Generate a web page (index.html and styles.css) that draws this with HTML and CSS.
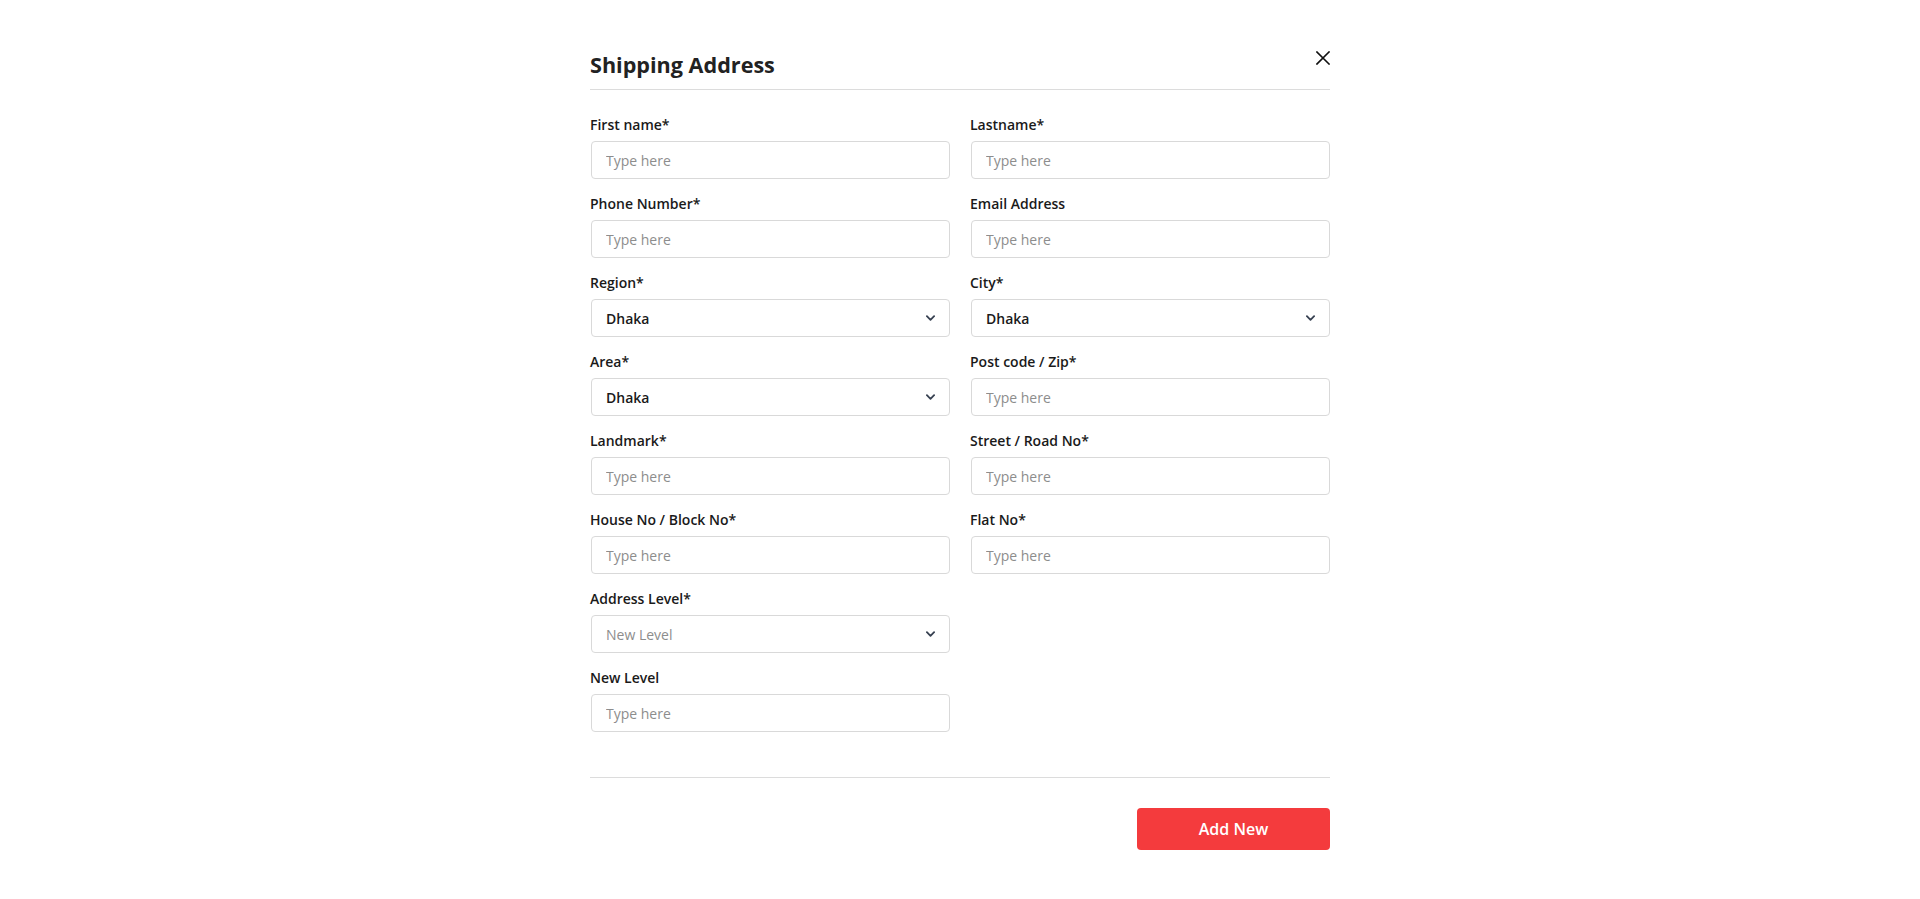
FILE: index.html
```html
<!DOCTYPE html>
<html lang="en">
<head>
<meta charset="utf-8">
<title>Shipping Address</title>
<link rel="stylesheet" href="styles.css">
</head>
<body>
<div class="modal">
  <div class="modal-header">
    <h1 class="modal-title">Shipping Address</h1>
    <button class="close-btn" type="button" aria-label="Close">
      <svg width="14" height="14" viewBox="0 0 14 14"><path d="M1 1L13 13M13 1L1 13" stroke="#111" stroke-width="1.6" fill="none" stroke-linecap="square"/></svg>
    </button>
  </div>
  <form class="form-grid">
    <div class="field"><label class="label">First name*</label><input class="input" type="text" placeholder="Type here"></div>
    <div class="field"><label class="label">Lastname*</label><input class="input" type="text" placeholder="Type here"></div>
    <div class="field"><label class="label">Phone Number*</label><input class="input" type="text" placeholder="Type here"></div>
    <div class="field"><label class="label">Email Address</label><input class="input" type="text" placeholder="Type here"></div>
    <div class="field"><label class="label">Region*</label><div class="select"><span class="select-value">Dhaka</span><svg class="chev" width="10" height="6" viewBox="0 0 10 6"><path d="M1 1L5 5L9 1" stroke="#374151" stroke-width="2" fill="none" stroke-linecap="round" stroke-linejoin="round"/></svg></div></div>
    <div class="field"><label class="label">City*</label><div class="select"><span class="select-value">Dhaka</span><svg class="chev" width="10" height="6" viewBox="0 0 10 6"><path d="M1 1L5 5L9 1" stroke="#374151" stroke-width="2" fill="none" stroke-linecap="round" stroke-linejoin="round"/></svg></div></div>
    <div class="field"><label class="label">Area*</label><div class="select"><span class="select-value">Dhaka</span><svg class="chev" width="10" height="6" viewBox="0 0 10 6"><path d="M1 1L5 5L9 1" stroke="#374151" stroke-width="2" fill="none" stroke-linecap="round" stroke-linejoin="round"/></svg></div></div>
    <div class="field"><label class="label">Post code / Zip*</label><input class="input" type="text" placeholder="Type here"></div>
    <div class="field"><label class="label">Landmark*</label><input class="input" type="text" placeholder="Type here"></div>
    <div class="field"><label class="label">Street / Road No*</label><input class="input" type="text" placeholder="Type here"></div>
    <div class="field"><label class="label">House No / Block No*</label><input class="input" type="text" placeholder="Type here"></div>
    <div class="field"><label class="label">Flat No*</label><input class="input" type="text" placeholder="Type here"></div>
    <div class="field"><label class="label">Address Level*</label><div class="select"><span class="select-placeholder">New Level</span><svg class="chev" width="10" height="6" viewBox="0 0 10 6"><path d="M1 1L5 5L9 1" stroke="#374151" stroke-width="2" fill="none" stroke-linecap="round" stroke-linejoin="round"/></svg></div></div>
    <div class="field empty"></div>
    <div class="field"><label class="label">New Level</label><input class="input" type="text" placeholder="Type here"></div>
  </form>
  <div class="modal-footer">
    <button class="btn-primary" type="button">Add New</button>
  </div>
</div>
</body>
</html>
```
FILE: styles.css
```css
* { box-sizing: border-box; }
html, body { margin: 0; padding: 0; background: #fff; }
body { font-family: "Open Sans", "Noto Sans", sans-serif; color: #222; }

.modal {
  width: 740px;
  margin: 0 auto;
  padding-top: 50px;
}

.modal-header {
  display: flex;
  justify-content: space-between;
  align-items: flex-start;
  padding-bottom: 9px;
  border-bottom: 1px solid #dcdcdc;
}

.modal-title {
  margin: 0;
  font-size: 21.6px;
  line-height: 30px;
  font-weight: 700;
  color: #222;
}

.close-btn {
  margin-top: 1px;
  padding: 0;
  border: 0;
  background: none;
  width: 14px;
  height: 14px;
  display: flex;
}

.form-grid {
  display: grid;
  grid-template-columns: 360px 360px;
  column-gap: 20px;
  row-gap: 15px;
  padding-top: 25px;
  margin: 0;
}

.field { display: flex; flex-direction: column; }

.label {
  font-size: 14px;
  line-height: 19px;
  font-weight: 600;
  color: #1a1a1a;
  margin-bottom: 7px;
}

.input, .select {
  height: 38px;
  width: calc(100% - 1px);
  margin-left: 1px;
  border: 1px solid #d9d9d9;
  border-radius: 4px;
  padding: 0 14px;
  font-family: inherit;
  font-size: 14px;
  color: #222;
  background: #fff;
  outline: none;
}

.input::placeholder { color: #8d8d8d; }

.select {
  display: flex;
  align-items: center;
  justify-content: space-between;
  padding-right: 14px;
}

.select-value { font-weight: 600; color: #1a1a1a; }
.select-placeholder { color: #8d8d8d; }

.chev { display: block; width: 9px; height: 6px; }

.modal-footer {
  margin-top: 45px;
  border-top: 1px solid #dcdcdc;
  padding-top: 30px;
  display: flex;
  justify-content: flex-end;
}

.btn-primary {
  width: 193px;
  height: 42px;
  border: 0;
  border-radius: 4px;
  background: #f43b3d;
  color: #fff;
  font-family: inherit;
  font-size: 16px;
  font-weight: 600;
}
```
